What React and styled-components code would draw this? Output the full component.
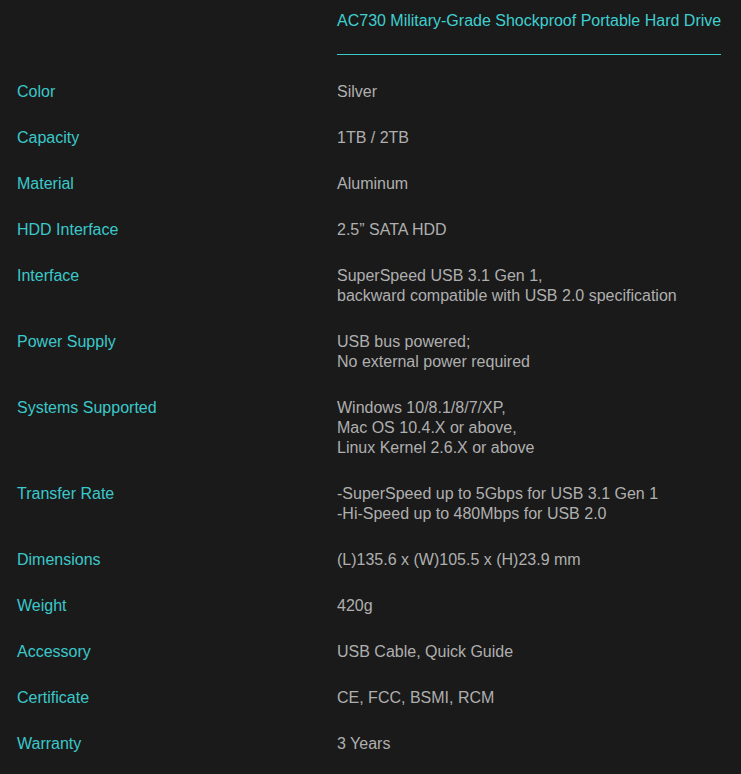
import styled, { createGlobalStyle } from "styled-components";

const specs = [
  ["Color", ["Silver"]],
  ["Capacity", ["1TB / 2TB"]],
  ["Material", ["Aluminum"]],
  ["HDD Interface", ["2.5” SATA HDD"]],
  ["Interface", ["SuperSpeed USB 3.1 Gen 1,", "backward compatible with USB 2.0 specification"]],
  ["Power Supply", ["USB bus powered;", "No external power required"]],
  ["Systems Supported", ["Windows 10/8.1/8/7/XP,", "Mac OS 10.4.X or above,", "Linux Kernel 2.6.X or above"]],
  ["Transfer Rate", ["-SuperSpeed up to 5Gbps for USB 3.1 Gen 1", "-Hi-Speed up to 480Mbps for USB 2.0"]],
  ["Dimensions", ["(L)135.6 x (W)105.5 x (H)23.9 mm"]],
  ["Weight", ["420g"]],
  ["Accessory", ["USB Cable, Quick Guide"]],
  ["Certificate", ["CE, FCC, BSMI, RCM"]],
  ["Warranty", ["3 Years"]],
];

const GlobalStyle = createGlobalStyle`
  html, body {
    margin: 0;
    background: #1a1a1a;
  }
  body {
    font-family: "Liberation Sans", Arial, sans-serif;
    font-size: 16px;
    line-height: 20px;
  }
`;

const SpecSheet = styled.div`
  min-height: 774px;
  padding: 11px 20px 0 17px;
  box-sizing: border-box;
  background: #1a1a1a;
`;

const Header = styled.div`
  display: grid;
  grid-template-columns: 320px 1fr;
`;

const Title = styled.h2`
  grid-column: 2;
  margin: 0;
  padding-bottom: 23px;
  font-size: 16px;
  font-weight: normal;
  line-height: 20px;
  white-space: nowrap;
  color: #3fcfd0;
  border-bottom: 1px solid #3cc9ca;
`;

const Rows = styled.div`
  padding-top: 14px;
`;

const Row = styled.div`
  display: grid;
  grid-template-columns: 320px 1fr;
  padding: 13px 0;
`;

const Label = styled.div`
  color: #3ac8ca;
`;

const Value = styled.div`
  color: #afafaf;
`;

export default function App() {
  return (
    <>
      <GlobalStyle />
      <SpecSheet>
        <Header>
          <Title>AC730 Military-Grade Shockproof Portable Hard Drive</Title>
        </Header>
        <Rows>
          {specs.map(([label, lines]) => (
            <Row key={label}>
              <Label>{label}</Label>
              <Value>
                {lines.map((line) => (
                  <div key={line}>{line}</div>
                ))}
              </Value>
            </Row>
          ))}
        </Rows>
      </SpecSheet>
    </>
  );
}
